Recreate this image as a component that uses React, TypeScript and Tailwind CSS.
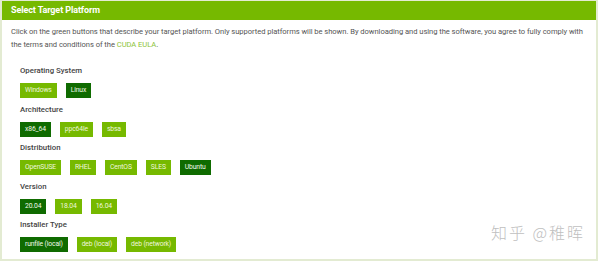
import React from 'react'

type Group = { label: string; options: string[]; selected: string }

const groups: Group[] = [
  { label: 'Operating System', options: ['Windows', 'Linux'], selected: 'Linux' },
  { label: 'Architecture', options: ['x86_64', 'ppc64le', 'sbsa'], selected: 'x86_64' },
  { label: 'Distribution', options: ['OpenSUSE', 'RHEL', 'CentOS', 'SLES', 'Ubuntu'], selected: 'Ubuntu' },
  { label: 'Version', options: ['20.04', '18.04', '16.04'], selected: '20.04' },
  { label: 'Installer Type', options: ['runfile (local)', 'deb (local)', 'deb (network)'], selected: 'runfile (local)' },
]

export default function App() {
  return (
    <div className="w-[600px] h-[263px] bg-white overflow-hidden font-['Roboto',sans-serif]">
      <div className="relative w-[598px] h-[261px] border-2 border-t-[1px] border-[#e3ebd2] bg-white">
        {/* header */}
        <div className="h-[19px] bg-[#76b900] flex items-center px-[9px]">
          <span className="text-white text-[9px] font-bold tracking-[-0.1px]">Select Target Platform</span>
        </div>

        <div className="px-[9px] pt-[5px]">
          <p className="text-[7.6px] leading-[13px] text-[#555] tracking-[-0.05px]">
            Click on the green buttons that describe your target platform. Only supported platforms will be shown. By downloading and using the software, you agree to fully comply with{' '}
            the terms and conditions of the <a className="text-[#8cc43a]">CUDA EULA</a>.
          </p>
        </div>

        <div className="pl-[18px] pt-[14px]">
          {groups.map((g) => (
            <div key={g.label} className="mb-[5.5px]">
              <div className="h-[12px] flex items-center text-[7.8px] font-medium text-[#444] mb-[6px]">{g.label}</div>
              <div className="flex gap-[9px]">
                {g.options.map((o) => (
                  <div
                    key={o}
                    className={
                      o === g.selected
                        ? 'h-[15px] px-[5px] flex items-center text-[6.8px] tracking-[-0.15px] text-[#f2f8ea] bg-[#0f6b00]'
                        : 'h-[15px] px-[5px] flex items-center text-[6.8px] tracking-[-0.15px] text-[#eef7dd] bg-[#76b900]'
                    }
                  >
                    {o}
                  </div>
                ))}
              </div>
            </div>
          ))}
        </div>

        <div className="absolute right-[11px] bottom-[15px] text-[16px] font-light text-[#c0c0c0] font-['Noto_Sans_CJK_SC',sans-serif] tracking-[2px]">
          知乎 @稚晖
        </div>
      </div>
    </div>
  )
}
